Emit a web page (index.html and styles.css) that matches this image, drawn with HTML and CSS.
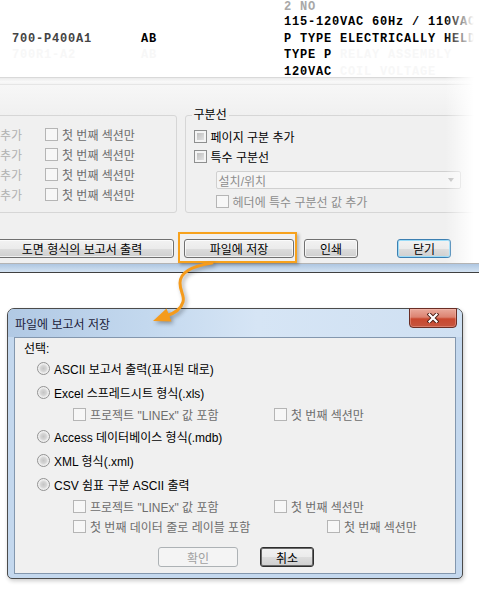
FILE: index.html
```html
<!DOCTYPE html>
<html lang="ko">
<head>
<meta charset="utf-8">
<title>파일에 보고서 저장</title>
<link rel="stylesheet" href="styles.css">
</head>
<body>
<div class="page">
  <div class="report">
    <div class="rgrid">
      <span class="first"></span><span class="first"></span><span class="first dim">2 NO</span>
      <span></span><span></span><span>115-120VAC 60Hz / 110VAC</span>
      <span class="gray">700-P400A1</span><span>AB</span><span>P TYPE ELECTRICALLY HELD</span>
      <span class="ghost">700R1-A2</span><span class="ghost">AB</span><span>TYPE P <span class="ghost">RELAY ASSEMBLY</span></span>
      <span></span><span></span><span>120VAC <span class="ghost">COIL VOLTAGE</span></span>
    </div>
  </div>
  <div class="tear"></div>
  <div class="panel">
    <div class="groups">
      <fieldset class="grp grp-l">
        <div class="grow"><span class="cut">추가</span><span class="cb dis"></span><span class="lt dim-t">첫 번째 섹션만</span></div>
        <div class="grow"><span class="cut">추가</span><span class="cb dis"></span><span class="lt dim-t">첫 번째 섹션만</span></div>
        <div class="grow"><span class="cut">추가</span><span class="cb dis"></span><span class="lt dim-t">첫 번째 섹션만</span></div>
        <div class="grow"><span class="cut">추가</span><span class="cb dis"></span><span class="lt dim-t">첫 번째 섹션만</span></div>
      </fieldset>
      <fieldset class="grp grp-r">
        <legend>구분선</legend>
        <div class="grow"><span class="cb"></span><span class="lt">페이지 구분 추가</span></div>
        <div class="grow"><span class="cb"></span><span class="lt">특수 구분선</span></div>
        <div class="combo"><span>설치/위치</span><span class="caret"></span></div>
        <div class="grow sub"><span class="cb dis"></span><span class="lt off">헤더에 특수 구분선 값 추가</span></div>
      </fieldset>
    </div>
    <div class="btnrow">
      <div class="btn b1">도면 형식의 보고서 출력</div>
      <div class="hl"><div class="btn b2">파일에 저장</div></div>
      <div class="btn b3">인쇄</div>
      <div class="btn b4 default">닫기</div>
    </div>
    <div class="fade-r"></div>
  </div>
  <div class="strip"></div>

  <div class="dialog">
    <div class="titlebar">
      <span class="title">파일에 보고서 저장</span>
      <div class="close">
        <svg width="12" height="10" viewBox="0 0 12 10">
          <path d="M2.5 1.5 L9.5 8.5 M9.5 1.5 L2.5 8.5" stroke="#4a1c14" stroke-width="4" stroke-linecap="square"/>
          <path d="M2.5 1.5 L9.5 8.5 M9.5 1.5 L2.5 8.5" stroke="#ffffff" stroke-width="2.2" stroke-linecap="square"/>
        </svg>
      </div>
    </div>
    <div class="client">
      <div class="row r-lbl">선택:</div>
      <div class="row r-rad"><span class="rd"></span><span class="rt">ASCII 보고서 출력(표시된 대로)</span></div>
      <div class="row r-rad"><span class="rd"></span><span class="rt">Excel 스프레드시트 형식(.xls)</span></div>
      <div class="row r-chk">
        <span class="c-a"><span class="cb dis"></span><span class="lt dim-t">프로젝트 "LINEx" 값 포함</span></span>
        <span class="c-x"><span class="cb dis"></span><span class="lt dim-t">첫 번째 섹션만</span></span>
      </div>
      <div class="row r-rad"><span class="rd"></span><span class="rt">Access 데이터베이스 형식(.mdb)</span></div>
      <div class="row r-rad"><span class="rd"></span><span class="rt">XML 형식(.xml)</span></div>
      <div class="row r-rad"><span class="rd"></span><span class="rt">CSV 쉼표 구분 ASCII 출력</span></div>
      <div class="row r-chk">
        <span class="c-a"><span class="cb dis"></span><span class="lt dim-t">프로젝트 "LINEx" 값 포함</span></span>
        <span class="c-x"><span class="cb dis"></span><span class="lt dim-t">첫 번째 섹션만</span></span>
      </div>
      <div class="row r-chk">
        <span class="c-b"><span class="cb dis"></span><span class="lt dim-t">첫 번째 데이터 줄로 레이블 포함</span></span>
        <span class="c-x"><span class="cb dis"></span><span class="lt dim-t">첫 번째 섹션만</span></span>
      </div>
      <div class="dbtns">
        <div class="dbtn ok">확인</div>
        <div class="dbtn cancel">취소</div>
      </div>
    </div>
  </div>

  <svg class="arrow" width="479" height="591" viewBox="0 0 479 591">
    <path d="M212 263 C 192 266, 180 272, 180 283 C 180 292, 185 296, 183 302 C 181 309, 176 313, 166 316" fill="none" stroke="#f59b1c" stroke-width="3" stroke-linecap="round"/>
    <polygon points="153,321 166.5,308.4 171.5,321.6" fill="#f59b1c"/>
  </svg>
</div>
</body>
</html>
```

FILE: styles.css
```css
html, body {
  margin: 0;
  padding: 0;
}
body {
  width: 479px;
  height: 591px;
  overflow: hidden;
  background: #fff;
  font-family: "Liberation Sans", "Noto Sans CJK KR", sans-serif;
  font-size: 12px;
  color: #000;
}
.page {
  position: relative;
  width: 479px;
  height: 591px;
  overflow: hidden;
}

/* report text */
.report {
  height: 77px;
  overflow: hidden;
}
.rgrid {
  display: grid;
  grid-template-columns: 129px 143px 1fr;
  grid-template-rows: 14px repeat(4, 16.5px);
  padding-left: 12px;
  font-family: "Liberation Mono", monospace;
  font-weight: bold;
  font-size: 12px;
  letter-spacing: 0.8px;
  line-height: 16.5px;
  white-space: nowrap;
}
.rgrid .first {
  line-height: 14px;
}
.dim { color: #a8a8a8; }
.gray { color: #444; }
.ghost { color: #f7f7f7; }

.tear {
  height: 8px;
  box-sizing: border-box;
  border-top: 1px solid #d9d9d9;
  background: linear-gradient(#ebebeb, #f9f9f9 60%, #f4f4f4);
  border-bottom: 1px solid #e6e6e6;
}

/* panel */
.panel {
  position: relative;
  height: 178px;
  box-sizing: border-box;
  padding-top: 23px;
  background: linear-gradient(180deg, #f7f7f7, #f0f0f0 30px);
}
.groups {
  display: flex;
  align-items: stretch;
  margin-left: -10px;
}
.grp {
  margin: 0;
  min-width: 0;
  border: 1px solid #d6d6d6;
  border-radius: 3px;
  box-sizing: border-box;
}
.grp-l {
  width: 190px;
  margin-top: 7px;
  padding: 8px 0 0 9px;
}
.grp-r {
  width: 300px;
  margin-left: 8px;
  padding: 4px 0 3px 8px;
}
.grp-r legend {
  padding: 0 2px;
  margin-left: -2px;
  line-height: 14px;
  height: 14px;
}
.grow {
  display: flex;
  align-items: center;
  height: 20px;
  white-space: nowrap;
}
.cut {
  width: 45px;
  color: #b0b0b0;
}
.lt { margin-left: 4px; }
.dim-t { color: #6d6d6d; }
.off { color: #8d8d8d; }
.sub {
  height: 16px;
  margin: 4px 0 0 22px;
}

.cb {
  display: inline-block;
  flex: none;
  width: 13px;
  height: 13px;
  box-sizing: border-box;
  border: 1px solid #8e8f8f;
  background: linear-gradient(135deg, #b4b4b4, #ececec);
  box-shadow: inset 0 0 0 2px #f4f4f4;
}
.cb.dis {
  border-color: #b5b5b5;
  background: #f7f7f7;
  box-shadow: none;
}

.combo {
  display: flex;
  align-items: center;
  justify-content: space-between;
  margin: 5px 0 0 22px;
  width: 245px;
  height: 18px;
  box-sizing: border-box;
  border: 1px solid #d0d0d0;
  border-radius: 2px;
  background: #f5f5f5;
  padding: 0 6px 0 2px;
  color: #8d8d8d;
}
.caret {
  width: 0;
  height: 0;
  border-left: 3.5px solid transparent;
  border-right: 3.5px solid transparent;
  border-top: 4px solid #bdbdbd;
}

.btnrow {
  display: flex;
  margin: 26px 0 0 -10px;
  height: 19px;
}
.btn {
  height: 19px;
  box-sizing: border-box;
  border: 1px solid #707070;
  border-radius: 3px;
  background: linear-gradient(#f2f2f2 0, #ebebeb 50%, #dddddd 51%, #cfcfcf 100%);
  box-shadow: inset 0 0 0 1px rgba(255,255,255,0.7);
  display: flex;
  align-items: center;
  justify-content: center;
  white-space: nowrap;
}
.b1 { width: 184px; }
.b2 { width: 110px; }
.b3 { width: 54px; margin-left: 10px; }
.b4 { width: 54px; margin-left: 39px; }
.default {
  border-color: #3c7fb1;
  box-shadow: inset 0 0 0 1px #9bdcf8;
}
.hl {
  position: relative;
  display: flex;
  margin-left: 10px;
}
.hl::after {
  content: "";
  position: absolute;
  left: -6px;
  right: -3px;
  top: -7px;
  bottom: -5px;
  border: 2px solid #f7a21d;
  box-shadow: 2px 2px 3px rgba(0,0,0,0.25);
}
.fade-r {
  position: absolute;
  top: -85px;
  right: 0;
  width: 34px;
  height: 263px;
  background: linear-gradient(90deg, rgba(255,255,255,0), #fff 85%);
}

.strip {
  height: 10px;
  box-sizing: border-box;
  border-top: 1px solid #b4b4b4;
  border-bottom: 1px solid #404040;
  background: linear-gradient(#aec6e1, #d4e3f2);
}

/* dialog */
.dialog {
  margin: 35px 0 0 7px;
  width: 456px;
  height: 271px;
  box-sizing: border-box;
  border: 1px solid #4b4b4b;
  border-radius: 7px 7px 5px 5px;
  background: #c4d8ee;
  padding: 0 6px 4px;
  display: flex;
  flex-direction: column;
  box-shadow: 1px 2px 4px rgba(0,0,0,0.2);
}
.titlebar {
  height: 28px;
  display: flex;
  align-items: center;
  margin: 0 -6px;
  padding: 0 6px 0 7px;
  border-radius: 6px 6px 0 0;
  background: linear-gradient(90deg, #b1c9e4 0%, #c3d8ee 30%, #d6e5f5 55%, #cfe0f2 100%);
}
.title {
  color: #1c1c3a;
}
.close {
  margin-left: auto;
  align-self: flex-start;
  margin-top: -1px;
  margin-right: -1px;
  width: 48px;
  height: 20px;
  box-sizing: border-box;
  border: 1px solid #6a2d24;
  border-radius: 0 0 4px 4px;
  background: linear-gradient(#e9a99b 0%, #dc8371 45%, #c9482f 55%, #c5553f 100%);
  box-shadow: inset 0 0 0 1px rgba(255,200,190,0.35);
  display: flex;
  align-items: center;
  justify-content: center;
}
.close svg { display: block; }
.client {
  flex: 1;
  border: 1px solid #8397ae;
  background: #f0f0f0;
  padding-left: 9px;
  display: flex;
  flex-direction: column;
}
.row {
  display: flex;
  align-items: center;
  white-space: nowrap;
}
.r-lbl { height: 18px; }
.r-rad { height: 24px; padding-left: 13px; }
.r-chk { height: 20px; padding-left: 49px; }
.rd {
  flex: none;
  width: 13px;
  height: 13px;
  box-sizing: border-box;
  border-radius: 50%;
  border: 1px solid #929292;
  background: radial-gradient(circle at 50% 50%, #c4c4c4 0, #d6d6d6 3px, #ececec 4.5px, #f7f7f7 6px);
}
.rt { margin-left: 4px; }
.c-a, .c-b, .c-x {
  display: flex;
  align-items: center;
}
.c-a { width: 201px; }
.c-b { width: 254px; }
.dbtns {
  display: flex;
  gap: 22px;
  margin-top: 11px;
  padding-left: 134px;
}
.dbtn {
  height: 20px;
  box-sizing: border-box;
  border-radius: 3px;
  display: flex;
  align-items: center;
  justify-content: center;
}
.ok {
  width: 80px;
  border: 1px solid #adb2b5;
  background: #f4f4f4;
  color: #a0a0a0;
}
.cancel {
  width: 54px;
  border: 1px solid #2e2e2e;
  background: linear-gradient(#f2f2f2 0, #ebebeb 50%, #dddddd 51%, #cfcfcf 100%);
  box-shadow: inset 0 0 0 1px #6a6a6a;
}

.arrow {
  position: absolute;
  left: 0;
  top: 0;
  pointer-events: none;
  filter: drop-shadow(2px 2px 2px rgba(0,0,0,0.35));
}
```
